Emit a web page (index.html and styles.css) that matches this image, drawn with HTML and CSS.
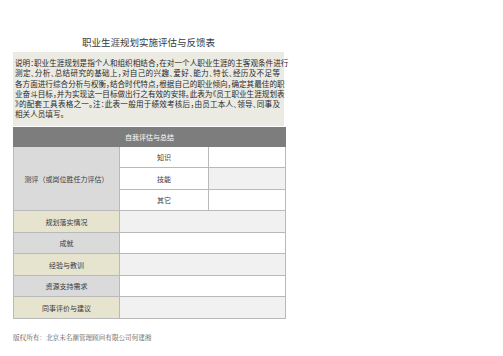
FILE: index.html
```html
<!DOCTYPE html>
<html lang="zh">
<head>
<meta charset="utf-8">
<title>职业生涯规划实施评估与反馈表</title>
<link rel="stylesheet" href="styles.css">
</head>
<body>
<div class="page">
  <h1 class="title">职业生涯规划实施评估与反馈表</h1>
  <div class="desc">
    <span class="ln">说明：职业生涯规划是指个人和组织相结合，在对一个人职业生涯的主客观条件进行</span>
    <span class="ln">测定、分析、总结研究的基础上，对自己的兴趣、爱好、能力、特长、经历及不足等</span>
    <span class="ln">各方面进行综合分析与权衡，结合时代特点，根据自己的职业倾向，确定其最佳的职</span>
    <span class="ln">业奋斗目标，并为实现这一目标做出行之有效的安排。此表为《员工职业生涯规划表</span>
    <span class="ln">》的配套工具表格之一。注：此表一般用于绩效考核后，由员工本人、领导、同事及</span>
    <span class="ln last">相关人员填写。</span>
  </div>
  <table class="form">
    <colgroup>
      <col class="c1"><col class="c2"><col class="c3">
    </colgroup>
    <tr><th colspan="3" class="head">自我评估与总结</th></tr>
    <tr>
      <td rowspan="3" class="lbl gray">测评（或岗位胜任力评估）</td>
      <td class="sub">知识</td><td class="val"></td>
    </tr>
    <tr><td class="sub">技能</td><td class="val alt"></td></tr>
    <tr><td class="sub">其它</td><td class="val"></td></tr>
    <tr><td class="lbl beige">规划落实情况</td><td colspan="2" class="val alt"></td></tr>
    <tr><td class="lbl gray">成就</td><td colspan="2" class="val"></td></tr>
    <tr><td class="lbl beige">经验与教训</td><td colspan="2" class="val alt"></td></tr>
    <tr><td class="lbl gray">资源支持需求</td><td colspan="2" class="val"></td></tr>
    <tr><td class="lbl beige">同事评价与建议</td><td colspan="2" class="val alt"></td></tr>
  </table>
  <p class="foot">版权所有：北京未名潮管理顾问有限公司何建湘</p>
</div>
</body>
</html>
```

FILE: styles.css
```css
html, body {
  margin: 0;
  padding: 0;
  background: #ffffff;
}
body {
  font-family: "Noto Sans CJK SC", "Noto Sans", sans-serif;
  color: #333333;
}
.page {
  width: 271px;
  padding: 35px 0 0 13px;
}
.title {
  margin: 0 0 3px 0;
  font-size: 9.5px;
  line-height: 14px;
  font-weight: normal;
  text-align: center;
  color: #3a3a3a;
}
.desc {
  background: #ebeae3;
  padding: 6px 4px 6px 2px;
  font-size: 7.6px;
  line-height: 10.3px;
  color: #2a2a2a;
  font-feature-settings: "halt";
}
.ln {
  display: block;
  text-align: justify;
  text-align-last: justify;
  white-space: nowrap;
}
.ln.last {
  text-align-last: left;
}
.form {
  margin-top: 1px;
  width: 272px;
  border-collapse: collapse;
  table-layout: fixed;
  font-size: 7px;
  color: #3a3a3a;
}
.c1 { width: 106px; }
.c2 { width: 89px; }
.c3 { width: 77px; }
.form th, .form td {
  border: 1px solid #b9b9b9;
  padding: 0;
  text-align: center;
  font-weight: normal;
  height: 20.5px;
}
.form .head {
  background: #7d7d7d;
  color: #ffffff;
  height: 18px;
  border-color: #7d7d7d;
}
.gray { background: #dadada; }
.beige { background: #e6e3cf; }
.sub { background: #ffffff; }
.val { background: #ffffff; }
.val.alt { background: #f1f1f1; }
.foot {
  margin: 14px 0 0 0;
  font-family: "Liberation Serif", "Noto Serif CJK SC", "Noto Sans CJK SC", serif;
  font-size: 6.6px;
  line-height: 10px;
  color: #555555;
}
```
